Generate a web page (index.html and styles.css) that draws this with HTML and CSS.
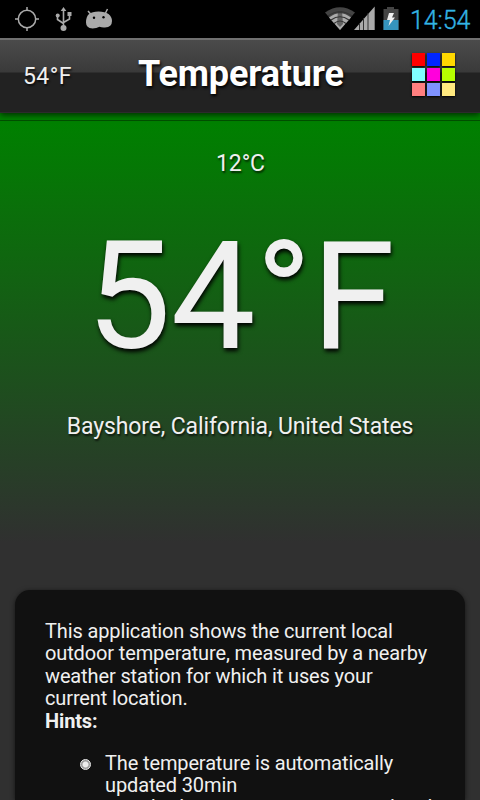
FILE: index.html
```html
<!DOCTYPE html>
<html lang="en">
<head>
<meta charset="utf-8">
<title>Temperature</title>
<link rel="stylesheet" href="styles.css">
</head>
<body>
<div class="status">
  <svg class="status-left" width="120" height="38" viewBox="0 0 120 38">
    <g fill="none" stroke="#aaa" stroke-width="1.5"><circle cx="27" cy="19" r="8.7"/><path d="M27 7v4M27 27v4M15 19h4M35 19h4"/></g>
    <g fill="none" stroke="#aaa" stroke-width="1.6"><path d="M63.500 10v18M57.500 15v4.500l6 4M69.500 14v5l-6 3.500"/></g>
    <g fill="#aaa"><path d="M63.500 7l2.800 4h-5.600z"/><circle cx="63.500" cy="28" r="3"/><circle cx="57.700" cy="15.500" r="2"/><path d="M67.500 12h4v4h-4z"/></g>
    <path d="M89 14q3-2.500 9.500-2.500t10 2.500q3.500 3 3.500 7 0 6-7 6.500-3 .3-5.500-.7-3 1.700-7 1.700-6.500-.5-6.500-6 0-6 3-8.500z" fill="#aaa"/>
    <path d="M88 11l3.500 4M107.500 9l-2.500 5" stroke="#aaa" stroke-width="1.500"/>
    <circle cx="94" cy="17.700" r="1.200"/><circle cx="103.500" cy="17.200" r="1.200"/>
  </svg>
  <svg class="status-right" width="84" height="38" viewBox="0 0 84 38">
    <path d="M5 12.500Q20 2 35 12.500L20 30z" fill="#444"/>
    <path d="M9 17.500Q20 9 31 17.500L20 30z" fill="#aaa"/>
    <path d="M8 16Q20 7.500 32 16M11 20Q20 13.500 29 20M14 23.500Q20 18.500 26 23.500" fill="none" stroke="#333" stroke-width="1.200"/>
    <path d="M18 11h4l1 13-3 3-3-3z" fill="#333" opacity=".6"/>
    <path d="M34 30L54.700 6.500V30z" fill="#aaa"/>
    <path d="M39.500 23v7M43.500 18v12M48 13v17" stroke="#333" stroke-width="1"/>
    <path d="M63.500 9H67V7h7v2h4.500v21h-15z" fill="#444"/><path d="M63.500 20h15v10h-15z" fill="#3594bd"/>
    <path d="M69 13h5l-2 4.500h3L68.500 26l1.500-6h-3z" fill="#eee"/>
  </svg>
  <span class="clock">14:54</span>
</div>
<header class="bar">
  <span class="small-temp">54°F</span>
  <h1>Temperature</h1>
  <div class="grid"><i class="c1"></i><i class="c2"></i><i class="c3"></i><i class="c4"></i><i class="c5"></i><i class="c6"></i><i class="c7"></i><i class="c8"></i><i class="c9"></i></div>
</header>
<main>
  <div class="celsius">12°C</div>
  <div class="fahrenheit">54°F</div>
  <div class="place">Bayshore, California, United States</div>
  <section class="card">
    <p>This application shows the current local<br>outdoor temperature, measured by a nearby<br>weather station for which it uses your<br>current location.<br><b>Hints:</b></p>
    <ul><li>The temperature is automatically<br>updated 30min<span class="next-line">even bad sensor areas measured and</span></li></ul>
  </section>
</main>
</body>
</html>
```
FILE: styles.css
```css
* { box-sizing: border-box; }
body { margin: 0; width: 480px; height: 800px; overflow: hidden; display: flex; flex-direction: column; font-family: Roboto, sans-serif; color: #f0f0f0; background: #000; }
.status { height: 38px; flex: none; display: flex; justify-content: space-between; background: #000; }
.status-right { margin-left: auto; flex: none; }
.clock { width: 76px; padding-left: 6px; font-size: 25px; font-weight: 300; line-height: 41px; letter-spacing: -.1px; color: #33b5e5; -webkit-text-stroke: .35px #33b5e5; white-space: nowrap; }
.bar { height: 75px; flex: none; display: flex; align-items: center; padding: 0 25px 0 23px; border-top: 2px solid #707070; border-bottom: 1px solid #2c2c2c; background: linear-gradient(#4b4b4b 0, #3a3a3a 32px, #222 33px, #222 100%); box-shadow: 0 2px 6px #000a; position: relative; z-index: 1; }
.small-temp { width: 115px; font-size: 23px; letter-spacing: .4px; text-shadow: 1px 2px 2px #000a; }
h1 { margin: 0 0 4px; width: 206px; font-size: 36px; line-height: 48px; letter-spacing: -.15px; color: #fff; white-space: nowrap; text-shadow: 1px 2px 3px #000; }
.grid { display: grid; grid-template-columns: repeat(3, 13px); grid-auto-rows: 13px; gap: 2px; margin: 0 0 3px auto; }
.grid i { box-shadow: 0 1px 2px #000; }
.c1 { background: #f00; } .c2 { background: #0026ff; } .c3 { background: #ffd800; }
.c4 { background: #7fffff; } .c5 { background: #ff00dc; } .c6 { background: #b6ff00; }
.c7 { background: #ff7f7f; } .c8 { background: #7f92ff; } .c9 { background: #ffe97f; }
main { height: 687px; flex: none; padding: 7px 15px 0; text-align: center; background: linear-gradient(transparent 7px, #005000 7px, #005000 8px, transparent 8px), linear-gradient(#008000 0, #008000 10px, #303030 430px); text-shadow: 1px 2px 2px #000a; }
.celsius { margin-top: 30px; font-size: 23px; line-height: 28px; letter-spacing: -.15px; padding-left: 1px; }
.fahrenheit { margin-top: 29px; height: 180px; font-size: 151px; line-height: 179px; letter-spacing: -.3px; padding-left: 1px; text-shadow: 1px 3px 4px #000; white-space: nowrap; }
.place { margin-top: 26px; font-size: 23px; line-height: 28px; height: 28px; letter-spacing: -.12px; white-space: nowrap; }
.card { margin-top: 149px; height: 210px; overflow: hidden; padding: 30px 30px 0; border-radius: 15px 15px 0 0; background: #111; box-shadow: 0 1px 5px #0009; text-align: left; text-shadow: none; font-size: 20px; line-height: 22.400px; letter-spacing: -.13px; white-space: nowrap; }
p { margin: 0; }
ul { margin: 20px 0 0; padding: 0 0 0 60px; list-style: none; }
li { position: relative; }
li::before { content: ""; position: absolute; left: -25px; top: 7px; width: 9px; height: 9px; border-radius: 50%; border: 1px solid #eee; background: radial-gradient(circle, #eee 0 2.500px, #999 3.500px); }
.next-line { display: block; margin-top: -1px; }
```
